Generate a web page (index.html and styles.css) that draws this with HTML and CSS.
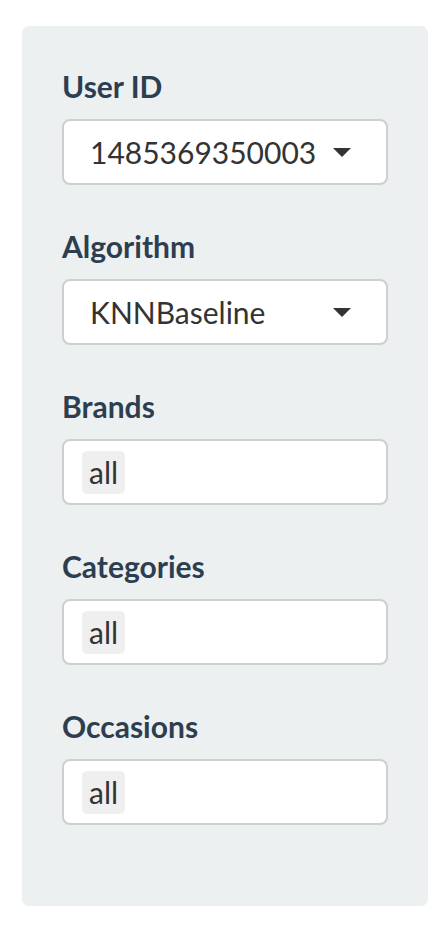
FILE: index.html
```html
<!DOCTYPE html>
<html>
<head>
<meta charset="utf-8">
<link rel="stylesheet" href="styles.css">
</head>
<body>
<div class="well">
  <div class="form-group">
    <label class="control-label">User ID</label>
    <div class="select-box">
      <span class="value">1485369350003</span>
      <span class="caret"></span>
    </div>
  </div>
  <div class="form-group">
    <label class="control-label">Algorithm</label>
    <div class="select-box">
      <span class="value">KNNBaseline</span>
      <span class="caret"></span>
    </div>
  </div>
  <div class="form-group">
    <label class="control-label">Brands</label>
    <div class="multi-box">
      <span class="chip">all</span>
    </div>
  </div>
  <div class="form-group">
    <label class="control-label">Categories</label>
    <div class="multi-box">
      <span class="chip">all</span>
    </div>
  </div>
  <div class="form-group">
    <label class="control-label">Occasions</label>
    <div class="multi-box">
      <span class="chip">all</span>
    </div>
  </div>
</div>
</body>
</html>
```
FILE: styles.css
```css
* { box-sizing: border-box; }
html, body { background: #ffffff; }
body {
  margin: 26px 20px 0 22px;
  font-family: Lato, "Open Sans", sans-serif;
}
.well {
  width: 406px;
  height: 880px;
  background: #ecf0f1;
  border-radius: 7px;
  padding: 39px 40px 0 40px;
}
.form-group {
  margin-bottom: 40px;
}
.control-label {
  display: block;
  font-weight: 700;
  font-size: 30px;
  line-height: 42px;
  color: #2c3e50;
  margin-bottom: 12px;
}
.select-box, .multi-box {
  height: 66px;
  background: #ffffff;
  border: 2px solid #cfcfcf;
  border-radius: 8px;
  display: flex;
  align-items: center;
}
.select-box {
  padding: 0 35px 0 26px;
  justify-content: space-between;
}
.value {
  font-size: 30px;
  color: #333333;
  line-height: 1;
}
.caret {
  width: 0;
  height: 0;
  border-left: 9px solid transparent;
  border-right: 9px solid transparent;
  border-top: 9px solid #333333;
}
.multi-box {
  padding: 0 18px;
}
.chip {
  background: #efefef;
  border-radius: 5px;
  height: 43px;
  padding: 0 7px;
  display: flex;
  align-items: center;
  font-size: 30px;
  color: #333333;
}
```
